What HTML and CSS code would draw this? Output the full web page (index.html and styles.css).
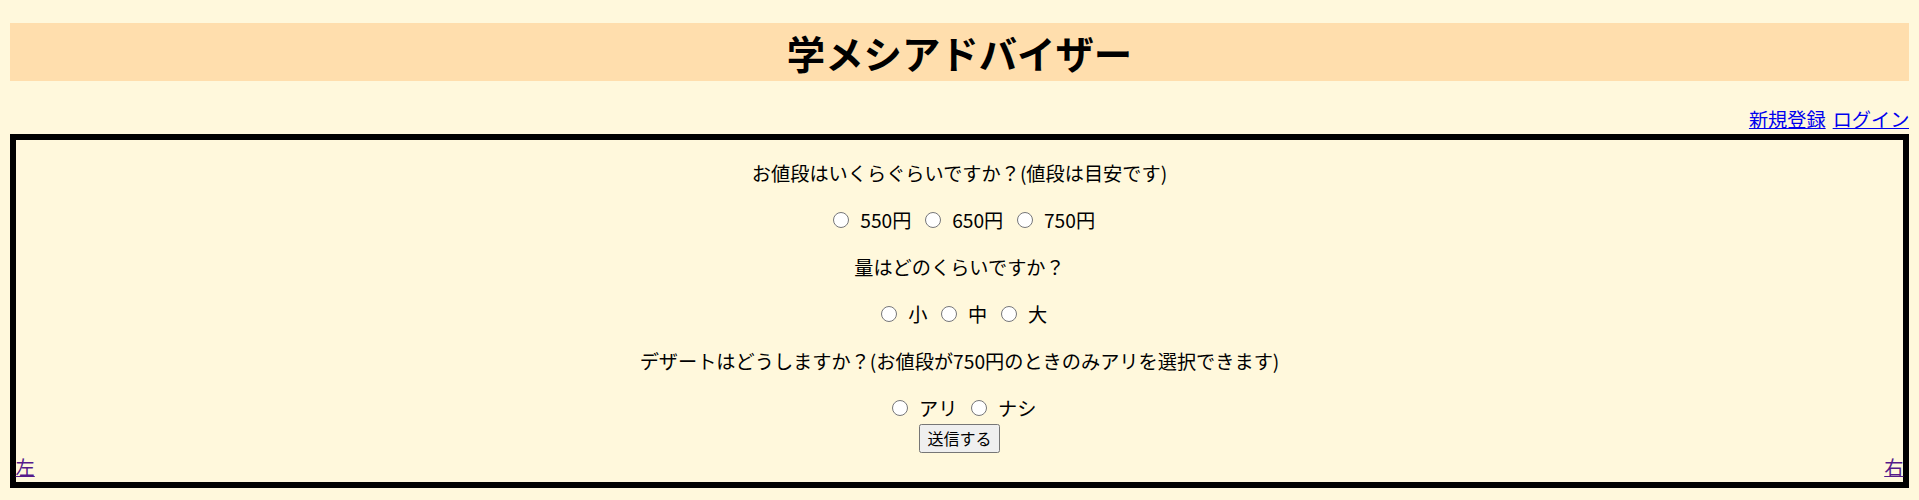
FILE: index.html
```html
<!DOCTYPE html>
<html lang="ja">
<head>
<meta charset="utf-8">
<title>学メシアドバイザー</title>
<link rel="stylesheet" href="styles.css">
</head>
<body>
<header class="site-header">
  <h1 class="title">学メシアドバイザー</h1>
</header>
<nav class="account-nav"><a href="#" class="link">新規登録</a><a href="#" class="link">ログイン</a></nav>
<main class="panel">
  <form class="survey">
    <p class="question">お値段はいくらぐらいですか？(値段は目安です)</p>
    <div class="options"><input type="radio" name="price" class="radio"> 550円 <input type="radio" name="price" class="radio"> 650円 <input type="radio" name="price" class="radio"> 750円</div>
    <p class="question">量はどのくらいですか？</p>
    <div class="options"><input type="radio" name="size" class="radio"> 小 <input type="radio" name="size" class="radio"> 中 <input type="radio" name="size" class="radio"> 大</div>
    <p class="question">デザートはどうしますか？(お値段が750円のときのみアリを選択できます)</p>
    <div class="options"><input type="radio" name="dessert" class="radio"> アリ <input type="radio" name="dessert" class="radio"> ナシ</div>
    <div class="submit-row"><button type="submit" class="submit">送信する</button></div>
  </form>
  <div class="pager"><a href="#" class="pager-link">左</a><a href="#" class="pager-link">右</a></div>
</main>
</body>
</html>
```

FILE: styles.css
```css
html, body {
  background: #fff8dc;
}

body {
  margin: 0 9.6px 9.6px;
  padding-top: 0;
  font-family: "Noto Sans CJK JP", "Noto Sans", sans-serif;
  font-size: 19.2px;
  color: #000;
}

.site-header {
  padding-top: 23px;
}

.title {
  margin: 0;
  height: 58px;
  line-height: 58px;
  font-size: 38.4px;
  font-weight: 700;
  text-align: center;
  background: #ffdead;
}

.account-nav {
  margin-top: 24px;
  line-height: 29px;
  display: flex;
  justify-content: flex-end;
  gap: 7px;
}

.link {
  color: #0000ee;
}

.panel {
  border: 6px solid #000;
}

.survey {
  margin: 0;
  text-align: center;
}

.question,
.options {
  margin: 19px 0 0;
  line-height: 28px;
}

.radio {
  width: 15.6px;
  height: 15.6px;
  margin: 3.6px 7px 0 9.5px;
}

.submit-row {
  margin-top: 2px;
  height: 29px;
  display: flex;
  justify-content: center;
}

.submit {
  height: 29px;
  padding: 0 7.2px;
  font-family: "Noto Sans CJK JP", sans-serif;
  font-size: 16px;
  line-height: 27px;
  color: #000;
  background: #efefef;
  border: 1px solid #767676;
  border-radius: 2.4px;
}

.pager {
  display: flex;
  justify-content: space-between;
  line-height: 29px;
}

.pager-link {
  color: #551a8b;
}
```
